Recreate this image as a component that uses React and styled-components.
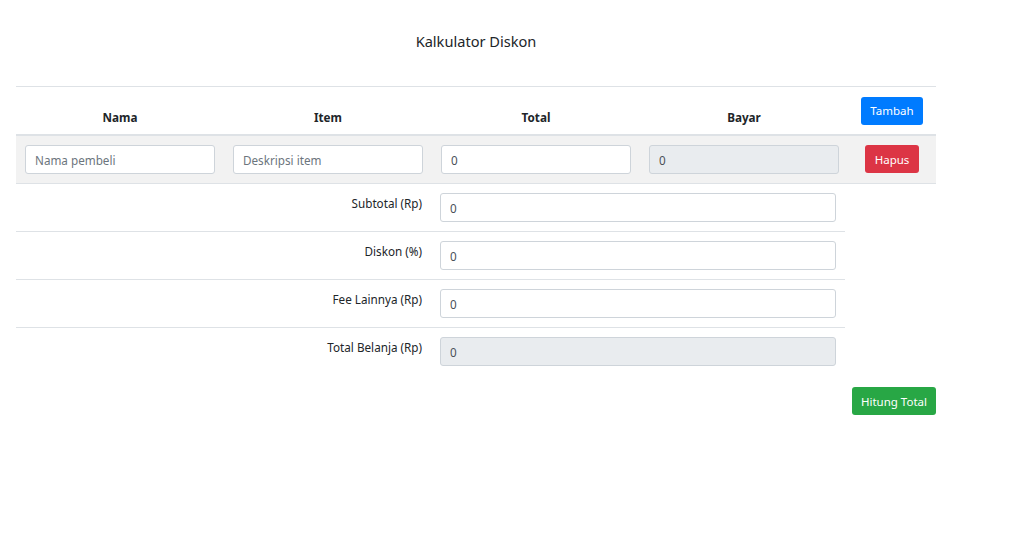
import React from 'react';
import styled, { createGlobalStyle } from 'styled-components';

const Global = createGlobalStyle`
  body {
    margin: 0;
    background: #fff;
    font-family: "Segoe UI", "Noto Sans", "Open Sans", sans-serif;
    color: #212529;
  }
`;

const Page = styled.div`
  width: 920px;
  padding: 0 16px;
`;

const Title = styled.h1`
  margin: 0;
  height: 86px;
  padding-top: 31px;
  box-sizing: border-box;
  text-align: center;
  font-size: 14.6px;
  font-weight: 400;
  color: #212529;
`;

const HeadRow = styled.div`
  display: grid;
  grid-template-columns: repeat(4, 208px) 88px;
  border-top: 1px solid #dee2e6;
  border-bottom: 2px solid #dee2e6;
`;

const Th = styled.div`
  padding: 9px;
  display: flex;
  align-items: ${({ $center }) => ($center ? 'center' : 'flex-end')};
  justify-content: center;
  font-size: 11.7px;
  font-weight: 700;
  line-height: 16px;
  height: 29px;
`;

const BodyRow = styled.div`
  display: grid;
  grid-template-columns: repeat(4, 208px) 88px;
  background: #f2f2f2;
  border-bottom: 1px solid #dee2e6;
`;

const Td = styled.div`
  padding: 9px;
  display: flex;
  justify-content: center;
`;

const Input = styled.input`
  box-sizing: border-box;
  width: 100%;
  height: 29px;
  padding: 0 9px;
  border: 1px solid #ced4da;
  border-radius: 3px;
  font-family: inherit;
  font-size: 11.7px;
  color: #495057;
  background: ${({ readOnly }) => (readOnly ? '#e9ecef' : '#fff')};
  outline: none;

  &::placeholder {
    color: #6c757d;
  }
`;

const Button = styled.button`
  height: 28px;
  padding: 0 ${({ $pad }) => $pad || 9}px;
  border: none;
  border-radius: 3px;
  font-family: inherit;
  font-size: 11.5px;
  color: #fff;
  background: ${({ $color }) => $color};
  cursor: pointer;
`;

const SumRow = styled.div`
  display: grid;
  grid-template-columns: 208px 207px 414px;
  width: 829px;
  border-top: ${({ $first }) => ($first ? 'none' : '1px solid #dee2e6')};
`;

const SumCell = styled.div`
  padding: 9px;
`;

const Label = styled.div`
  padding-top: 1px;
  text-align: right;
  font-size: 11.7px;
  line-height: 18px;
  color: #212529;
`;

const Footer = styled.div`
  display: flex;
  justify-content: flex-end;
  padding-top: 12px;
`;

const summary = [
  { label: 'Subtotal (Rp)' },
  { label: 'Diskon (%)' },
  { label: 'Fee Lainnya (Rp)' },
  { label: 'Total Belanja (Rp)', readOnly: true },
];

export default function App() {
  return (
    <Page>
      <Global />
      <Title>Kalkulator Diskon</Title>
      <HeadRow>
        <Th>Nama</Th>
        <Th>Item</Th>
        <Th>Total</Th>
        <Th>Bayar</Th>
        <Th $center>
          <Button $color="#007bff">Tambah</Button>
        </Th>
      </HeadRow>
      <BodyRow>
        <Td><Input placeholder="Nama pembeli" /></Td>
        <Td><Input placeholder="Deskripsi item" /></Td>
        <Td><Input defaultValue="0" /></Td>
        <Td><Input defaultValue="0" readOnly /></Td>
        <Td><Button $color="#dc3545" $pad={10}>Hapus</Button></Td>
      </BodyRow>
      {summary.map((s, i) => (
        <SumRow key={s.label} $first={i === 0}>
          <SumCell />
          <SumCell><Label>{s.label}</Label></SumCell>
          <SumCell><Input defaultValue="0" readOnly={s.readOnly} /></SumCell>
        </SumRow>
      ))}
      <Footer>
        <Button $color="#28a745">Hitung Total</Button>
      </Footer>
    </Page>
  );
}
